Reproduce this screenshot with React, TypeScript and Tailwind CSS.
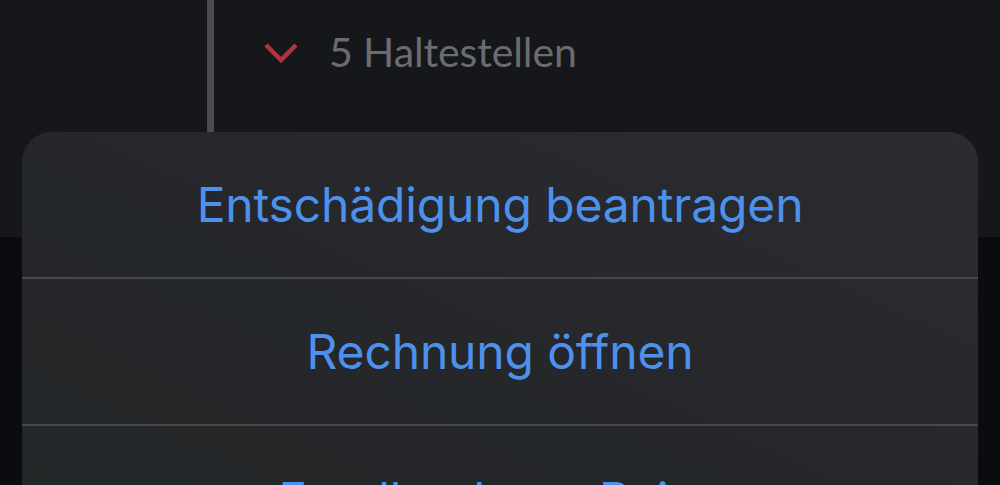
import React from "react";

const actions = ["Entschädigung beantragen", "Rechnung öffnen", "Feedback zur Reise"];

function Chevron() {
  return (
    <svg width="36" height="24" viewBox="0 0 36 24" fill="none">
      <path d="M3 4 L18 19 L33 4" stroke="#b3323b" strokeWidth="4.5" strokeLinecap="butt" strokeLinejoin="miter" />
    </svg>
  );
}

export default function App() {
  return (
    <div className="relative w-[1000px] h-[485px] overflow-hidden bg-[#0a0c10]" style={{ fontFamily: "Inter, 'Noto Sans', sans-serif" }}>
      {/* journey detail behind the sheet */}
      <div className="h-[237px] bg-[#16171b] flex pl-[207px]">
        <div className="w-[7px] h-full bg-[#4b4c50]" />
        <div className="flex items-start pt-[26px] pl-[49px] gap-[30px]">
          <div className="pt-[15px]">
            <Chevron />
          </div>
          <span
            className="text-[41px] leading-[52px] text-[#6b6c70] tracking-[-0.1px]"
            style={{ fontFamily: "Lato, 'Open Sans', sans-serif" }}
          >
            5 Haltestellen
          </span>
        </div>
      </div>

      {/* action sheet */}
      <div className="absolute left-[22px] right-[22px] top-[132px] rounded-t-[30px] bg-gradient-to-bl from-[#2a2c32] via-[#25272a] to-[#232627] flex flex-col">
        {actions.map((label, i) => (
          <div
            key={label}
            className={
              "h-[147px] flex items-center justify-center " +
              (i < actions.length - 1 ? "border-b-2 border-[#46484b]" : "")
            }
          >
            <span className="text-[48px] leading-none text-[#4e91ec] tracking-[-0.15px]">{label}</span>
          </div>
        ))}
      </div>
    </div>
  );
}
